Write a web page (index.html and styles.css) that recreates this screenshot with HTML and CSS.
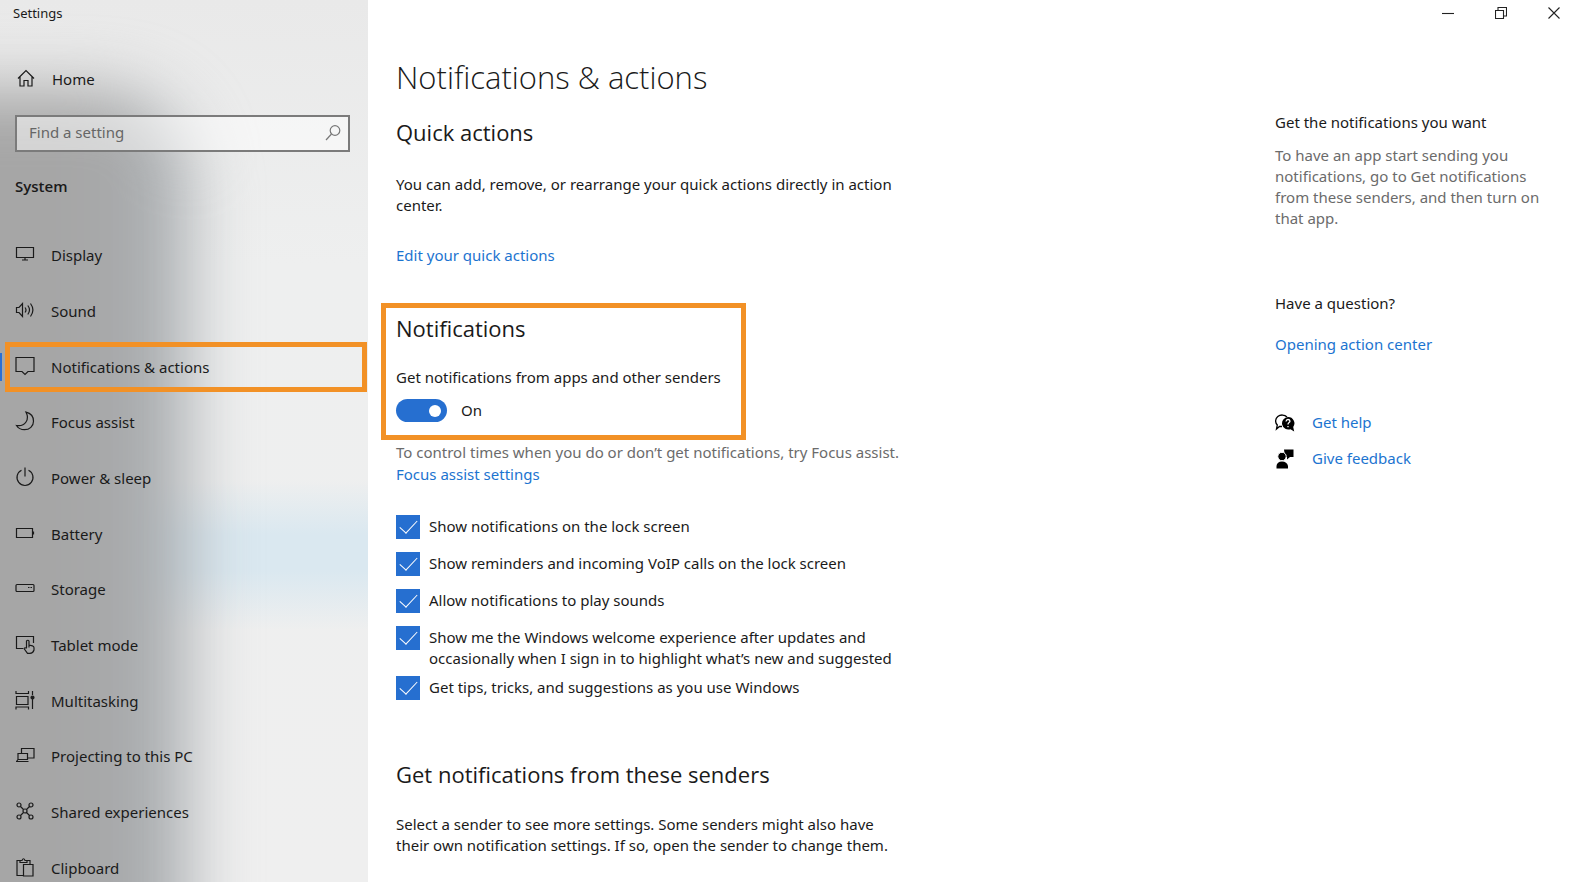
FILE: index.html
```html
<!DOCTYPE html>
<html lang="en">
<head>
<meta charset="utf-8">
<title>Settings</title>
<link rel="stylesheet" href="styles.css">
</head>
<body>
<div class="window">
  <aside class="sidebar">
    <div class="sidebar-title">Settings</div>
    <a class="home" href="#">
      <svg class="icon" viewBox="0 0 20 20"><path d="M2 10.500 10 2.500 18 10.500M4 9v9h4v-5.500h4V18h4V9"/></svg>
      <span>Home</span>
    </a>
    <label class="search">
      <input type="text" placeholder="Find a setting" aria-label="Find a setting">
      <svg class="icon search-icon" viewBox="0 0 20 20"><circle cx="12" cy="7.500" r="4.800"/><path d="M8.500 11 3 17"/></svg>
    </label>
    <div class="section">System</div>
    <nav class="nav">
      <a href="#"><svg class="icon" viewBox="0 0 20 20"><path d="M1.500 3.500h17v10h-17zM10 13.500v3M7 16h6"/></svg><span>Display</span></a>
      <a href="#"><svg class="icon" viewBox="0 0 20 20"><path d="M1.500 7.500h2.500l3.500-4v13l-3.500-4H1.500zM10 7.500q2 2.500 0 5M12.800 5.500q3.400 4.500 0 9M15.500 3.500q4.800 6.500 0 13"/></svg><span>Sound</span></a>
      <a href="#" class="current"><svg class="icon" viewBox="0 0 20 20"><path d="M1 1.500h18v14h-6L10 18.500 7 15.500H1z"/></svg><span>Notifications &amp; actions</span></a>
      <a href="#"><svg class="icon" viewBox="0 0 20 20"><path d="M11 1.200c5 1.200 7.500 5 7.500 9 0 5-4 8.500-9 8.500-3.500 0-6.500-1.700-8-4.200 4 .7 7.500-.5 9.500-3.500 2-3 1.800-6.500 0-9.800z"/></svg><span>Focus assist</span></a>
      <a href="#"><svg class="icon" viewBox="0 0 20 20"><path d="M6.500 3.300a8 8 0 1 0 7 0M10 .5v9"/></svg><span>Power &amp; sleep</span></a>
      <a href="#"><svg class="icon" viewBox="0 0 20 20"><path d="M1.500 5.500h16v9h-16zM18.500 8.500v3"/></svg><span>Battery</span></a>
      <a href="#"><svg class="icon" viewBox="0 0 20 20"><rect x="1" y="6.500" width="18" height="7" rx="1"/><path d="M13 9.500h1.500M15.500 9.500H17"/></svg><span>Storage</span></a>
      <a href="#"><svg class="icon" viewBox="0 0 20 20"><path d="M8 14.500H1.500v-12h17V9M11.500 14V7q1.400-1.500 2.500 0v4l3.500.8q1.500.4 1.500 2V16q-1 3.300-4 3.300h-2.500L9 14.500q1-1.500 2.500 0M14 11v2.500"/></svg><span>Tablet mode</span></a>
      <a href="#"><svg class="icon" viewBox="0 0 20 20"><path d="M1 1v2.500h12.500V1M1.500 6.500h11.500v8H1.500zM1 19.500V17h12.500v2.500M17.500 1v4M17.500 9v10"/><circle class="solid" cx="17.500" cy="7.500" r="1.500"/></svg><span>Multitasking</span></a>
      <a href="#"><svg class="icon" viewBox="0 0 20 20"><path d="M6.500 8V3.500h12.500v9.500h-6M3 8.500h9.500v6H3zM1 16.500h12.500M3 14.500l-1.500 2"/></svg><span>Projecting to this PC</span></a>
      <a href="#"><svg class="icon" viewBox="0 0 20 20"><circle cx="4" cy="4" r="2"/><circle cx="16" cy="4" r="2"/><circle cx="4" cy="16" r="2"/><circle cx="16" cy="16" r="2"/><circle cx="10" cy="10" r="2"/><path d="m5.500 5.500 3 3M14.500 5.500l-3 3M5.500 14.500l3-3M14.500 14.500l-3-3"/></svg><span>Shared experiences</span></a>
      <a href="#"><svg class="icon" viewBox="0 0 20 20"><path d="M8 18.500H2v-15h3.500M11.500 3.500H15V7M5 5.500v-2h2Q8.500 0 10 3.500h2v2zM8.500 7.500H18v11.500H8.500z"/></svg><span>Clipboard</span></a>
    </nav>
  </aside>

  <div class="page">
    <header class="titlebar">
      <button type="button" aria-label="Minimize"><svg viewBox="0 0 12 12"><path d="M0 6.500h12"/></svg></button>
      <button type="button" aria-label="Restore"><svg viewBox="0 0 12 12"><path d="M.5 3.500h8v8h-8zM3 3.500v-3h8.500v8.500h-3"/></svg></button>
      <button type="button" aria-label="Close"><svg viewBox="0 0 12 12"><path d="m.5.500 11 11M11.500.500l-11 11"/></svg></button>
    </header>

    <div class="columns">
      <main class="main">
        <h1>Notifications &amp; actions</h1>
        <h2 class="quick">Quick actions</h2>
        <p class="intro">You can add, remove, or rearrange your quick actions directly in action center.</p>
        <a class="edit" href="#">Edit your quick actions</a>

        <section class="callout">
          <h2>Notifications</h2>
          <label for="all">Get notifications from apps and other senders</label>
          <div class="switch-row">
            <input id="all" class="switch" type="checkbox" role="switch" checked>
            <span>On</span>
          </div>
        </section>

        <p class="hint">To control times when you do or don’t get notifications, try Focus assist.</p>
        <a class="focus" href="#">Focus assist settings</a>

        <ul class="options">
          <li><label><input type="checkbox" checked><span>Show notifications on the lock screen</span></label></li>
          <li><label><input type="checkbox" checked><span>Show reminders and incoming VoIP calls on the lock screen</span></label></li>
          <li><label><input type="checkbox" checked><span>Allow notifications to play sounds</span></label></li>
          <li class="tall"><label><input type="checkbox" checked><span>Show me the Windows welcome experience after updates and occasionally when I sign in to highlight what’s new and suggested</span></label></li>
          <li><label><input type="checkbox" checked><span>Get tips, tricks, and suggestions as you use Windows</span></label></li>
        </ul>

        <h2 class="senders">Get notifications from these senders</h2>
        <p class="senders-text">Select a sender to see more settings. Some senders might also have their own notification settings. If so, open the sender to change them.</p>
      </main>

      <aside class="help">
        <h3>Get the notifications you want</h3>
        <p>To have an app start sending you notifications, go to Get notifications from these senders, and then turn on that app.</p>
        <h3 class="question">Have a question?</h3>
        <a class="topic" href="#">Opening action center</a>
        <a class="support" href="#">
          <svg viewBox="0 0 20 20"><path class="line" d="M7 13.500H4.500L1.500 16l.8-4A6 5.500 0 1 1 12 4"/><path d="M13 4a6.300 6.300 0 0 1 5.200 10l1 4.500-3.700-2.300A6.300 6.300 0 1 1 13 4z"/><path class="cut" d="M11 8.500q.3-2 2-2t2 1.600q0 1-1.200 1.700-.8.500-.8 1.700M13 13v1.300"/></svg>
          <span>Get help</span>
        </a>
        <a class="support" href="#">
          <svg viewBox="0 0 20 20"><path d="M9 .5h9.500V8H15l-3 2.500V8H10z"/><circle class="ring" cx="7" cy="7.500" r="4.200"/><path d="M1.500 19.500V17q.5-4.500 5.500-4.500t6 4.500v2.500z"/></svg>
          <span>Give feedback</span>
        </a>
      </aside>
    </div>
  </div>
</div>
</body>
</html>
```

FILE: styles.css
```css
* { box-sizing: border-box; }
html, body { height: 100%; }
body {
  margin: 0;
  overflow: hidden;
  background: #fff;
  color: #1a1a1a;
  font: 15px/21px "Noto Sans", "Open Sans", sans-serif;
}
h1, h2, h3, p, ul { margin: 0; padding: 0; }
a { color: #1c74d0; text-decoration: none; }

.window {
  display: grid;
  grid-template-columns: 368px 1fr;
  height: 100vh;
}

/* Sidebar */
.sidebar {
  position: relative;
  z-index: 0;
  overflow: hidden;
  background:
    linear-gradient(#e6eef200 480px, #dae8f0 535px, #dae8f0 570px, #e6eef200 630px),
    linear-gradient(#e9e9e9, #eeefef 30%, #efefef);
}
.sidebar::before {
  content: "";
  position: absolute;
  z-index: -1;
  inset: 90px 178px -120px -120px;
  border-radius: 0 90px 0 0;
  background: linear-gradient(90deg, #a6a6a6 65%, #adb2b6);
  filter: blur(32px);
}
.sidebar-title {
  padding: 3px 13px;
  font-size: 13px;
  line-height: 20px;
}
.icon {
  flex: none;
  width: 20px;
  height: 20px;
  fill: none;
  stroke: #1a1a1a;
  stroke-width: 1.2;
}
.icon .solid { fill: #1a1a1a; }
.home {
  display: flex;
  align-items: center;
  gap: 16px;
  margin-top: 42px;
  padding-left: 16px;
  color: #1a1a1a;
}
.home .icon { margin-bottom: 2px; }
.search {
  position: relative;
  display: block;
  margin: 25px 18px 0 15px;
}
.search input {
  display: block;
  width: 100%;
  height: 37px;
  padding: 0 40px 3px 12px;
  border: 2px solid #7b7b7b;
  border-radius: 0;
  outline: 0;
  background: #ffffff80;
  font: inherit;
}
.search input::placeholder { color: #666; opacity: 1; }
.search-icon {
  position: absolute;
  top: 8px;
  right: 7px;
  stroke: #777;
}
.section {
  padding: 24px 15px 31px;
  font-weight: 600;
  font-family: "Open Sans", "Noto Sans", sans-serif;
}
.nav {
  display: grid;
  grid-template-rows: repeat(12, 1fr);
  height: 668px;
}
.nav a {
  position: relative;
  display: flex;
  align-items: center;
  gap: 16px;
  padding-left: 15px;
  color: #1a1a1a;
}
.nav .icon { margin-bottom: 3px; }
.nav .current::before {
  content: "";
  position: absolute;
  left: 0;
  width: 2px;
  height: 28px;
  background: #2a6fd4;
}
.nav .current::after {
  content: "";
  position: absolute;
  inset: 3px 1px 3px 5px;
  border: 5px solid #f29126;
}

/* Page */
.titlebar {
  display: flex;
  justify-content: flex-end;
  gap: 41px;
  height: 28px;
  padding: 7px 12px 0 0;
}
.titlebar button {
  width: 12px;
  height: 12px;
  padding: 0;
  border: 0;
  background: none;
}
.titlebar svg {
  display: block;
  fill: none;
  stroke: #222;
  stroke-width: 1.1;
}
.columns {
  display: grid;
  grid-template-columns: 1fr 297px;
}
.main { padding: 27px 0 0 28px; }
.main > p { max-width: 512px; }
.main > a { display: block; }
h1 {
  font-family: "Open Sans", "Noto Sans", sans-serif;
  font-size: 31px;
  font-weight: 300;
  line-height: 44px;
}
h2 {
  font-family: "Open Sans", "Noto Sans", sans-serif;
  font-size: 22px;
  font-weight: 400;
  line-height: 32px;
}
.quick { margin-top: 17px; }
.intro { margin-top: 26px; }
.edit { margin-top: 29px; }
.callout {
  width: 365px;
  margin: 37px 0 0 -15px;
  padding: 4px 10px 13px;
  border: 5px solid #f29126;
}
.callout label {
  display: block;
  margin-top: 23px;
  white-space: nowrap;
}
.switch-row {
  display: flex;
  align-items: center;
  gap: 14px;
  height: 23px;
  margin-top: 11px;
}
.switch {
  display: flex;
  align-items: center;
  justify-content: flex-end;
  width: 51px;
  height: 23px;
  margin: 0;
  padding-right: 6px;
  border-radius: 12px;
  background: #266fd0;
  appearance: none;
}
.switch::after {
  content: "";
  width: 12px;
  height: 12px;
  border-radius: 50%;
  background: #fff;
}
.main .hint {
  max-width: none;
  margin-top: 2px;
  color: #6b6b6b;
}
.focus { margin-top: 1px; }
.options {
  margin-top: 30px;
  max-width: 520px;
  list-style: none;
}
.options li { margin-bottom: 13px; }
.options .tall { margin-bottom: 7px; }
.options li:last-child { margin-bottom: 0; }
.options label {
  display: flex;
  align-items: flex-start;
  gap: 9px;
}
.options span { padding-top: 1px; }
.options input {
  display: flex;
  flex: none;
  justify-content: center;
  width: 24px;
  height: 24px;
  margin: 0;
  background: #266fd0;
  appearance: none;
}
.options input::after {
  content: "";
  width: 8px;
  height: 16px;
  margin-top: 1px;
  border: solid #fff;
  border-width: 0 1px 1px 0;
  transform: rotate(43deg);
}
.senders { margin-top: 58px; }
.senders-text { margin-top: 24px; }

/* Help column */
.help { padding: 84px 28px 0 0; }
.help h3 {
  font-size: 15px;
  font-weight: 400;
}
.help p {
  margin-top: 12px;
  color: #6b6b6b;
}
.help .question { margin-top: 64px; }
.topic {
  display: block;
  margin: 20px 0 57px;
}
.support {
  display: flex;
  align-items: center;
  gap: 17px;
  margin-bottom: 15px;
}
.support svg {
  flex: none;
  width: 20px;
  height: 20px;
  fill: #000;
}
.support .line { fill: none; stroke: #000; stroke-width: 1.3; }
.support .cut { fill: none; stroke: #fff; stroke-width: 1.3; }
.support .ring { stroke: #fff; stroke-width: 1; }
```
